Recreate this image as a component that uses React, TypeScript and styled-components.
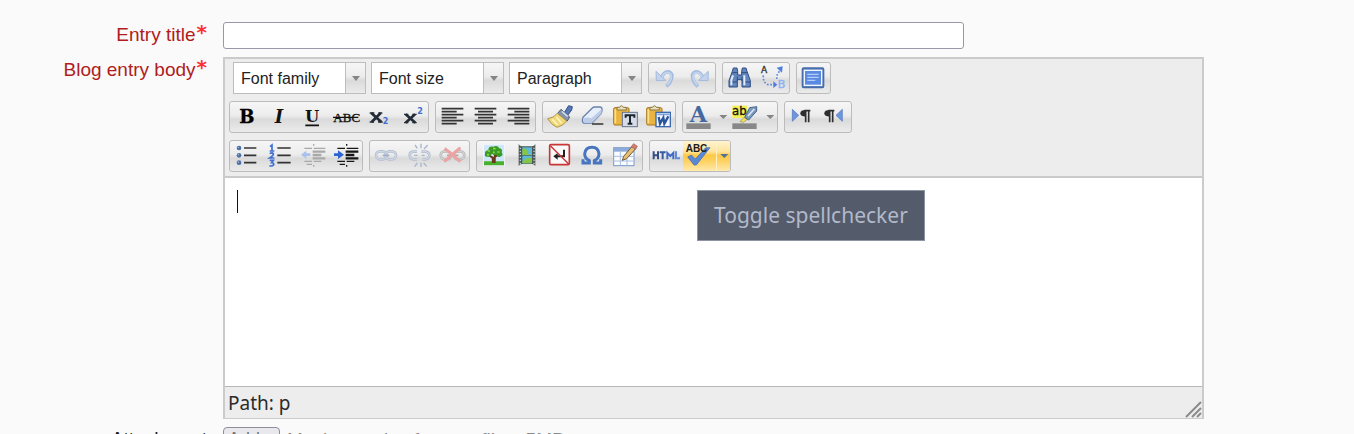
import React from "react";
import styled, { createGlobalStyle, css } from "styled-components";

const Global = createGlobalStyle`
  * { box-sizing: border-box; }
  html, body { margin: 0; height: 100%; overflow: hidden; }
  body { background: #fafafa; font-family: "Liberation Sans", Arial, sans-serif; color: #222; }
`;

const Form = styled.form`
  display: grid;
  grid-template-columns: 207px minmax(0, 1fr);
  column-gap: 16px;
  row-gap: 8px;
  padding: 22px 150px 0 0;
`;

const Label = styled.label<{ $plain?: boolean }>`
  display: flex;
  justify-content: flex-end;
  align-items: flex-start;
  gap: 1px;
  padding-top: ${(p) => (p.$plain ? "0" : "1px")};
  font-size: 19px;
  line-height: 24px;
  white-space: nowrap;
  color: ${(p) => (p.$plain ? "#222" : "#b01c20")};
`;

const Star = styled.span`
  font: bold 20px/18px "DejaVu Sans", sans-serif;
  color: #fb3034;
`;

const TitleInput = styled.input`
  width: 741px;
  max-width: 100%;
  height: 27px;
  padding: 0 6px;
  font: inherit;
  background: #fff;
  border: 1px solid #9a98a8;
  border-radius: 3px;
`;

const Editor = styled.section`
  border: 2px solid #cbcbcb;
  border-bottom-width: 1px;
  background: #ededed;
`;

const Toolbar = styled.div`
  display: flex;
  flex-direction: column;
  gap: 7px;
  padding: 3px 4px 4px;
  border-bottom: 2px solid #cacaca;
`;

const ToolRow = styled.div<{ $inset?: boolean }>`
  display: flex;
  gap: 6px;
  padding-left: ${(p) => (p.$inset ? "4px" : "0")};
`;

const SelectSet = styled.div`
  display: flex;
  gap: 5px;
`;

const shade = "linear-gradient(#f6f6f6 0%, #ececec 45%, #dadada 58%, #ebebeb 100%)";

const SelectBox = styled.span`
  display: grid;
  grid-template-columns: 1fr 20px;
  width: 133px;
  height: 32px;
  border: 1px solid #bdbdbd;
  background: #fff;
`;

const Select = styled.select`
  grid-area: 1 / 1 / 2 / 3;
  appearance: none;
  border: 0;
  padding: 0 0 0 7px;
  background: transparent;
  color: #222;
  font: 16px "Liberation Sans", Arial, sans-serif;
`;

const SelectArrow = styled.span`
  grid-area: 1 / 2;
  display: flex;
  align-items: center;
  justify-content: center;
  border-left: 1px solid #bdbdbd;
  background: ${shade};
  pointer-events: none;
`;

const Group = styled.div`
  display: flex;
  height: 32px;
  border: 1px solid #bcbcbc;
  border-radius: 3px;
  background: ${shade};
  overflow: hidden;
`;

const Tool = styled.button<{ $narrow?: boolean; $hot?: boolean }>`
  display: block;
  width: ${(p) => (p.$narrow ? "14px" : "33px")};
  height: 30px;
  padding: 0;
  border: 0;
  background: none;
  ${(p) =>
    p.$hot &&
    css`
      background: linear-gradient(#fff3d0 0%, #ffe49a 36%, #fdc944 48%, #fed468 70%, #ffe9ae 100%);
    `}
  ${(p) => p.$hot && p.$narrow && "border-left: 1px solid #fff0c4;"}
  svg { display: block; }
`;

const Writing = styled.div`
  position: relative;
  height: 208px;
  background: #fff;
`;

const TextArea = styled.textarea`
  display: block;
  width: 100%;
  height: 100%;
  padding: 12px;
  border: 0;
  outline: 0;
  resize: none;
  background: #fff;
  font: 19px/24px "Liberation Sans", Arial, sans-serif;
`;

const Caret = styled.span`
  position: absolute;
  left: 12px;
  top: 12px;
  width: 1px;
  height: 23px;
  background: #111;
`;

const Tooltip = styled.div`
  position: absolute;
  left: 472px;
  top: 12px;
  padding: 12px 16px;
  border: 1px solid #8d93a3;
  background: #545b6b;
  color: #b2b9c9;
  font: 21px/25px "Noto Sans", sans-serif;
  white-space: nowrap;
`;

const Status = styled.footer`
  display: flex;
  justify-content: space-between;
  align-items: flex-end;
  height: 32px;
  padding-left: 3px;
  border-top: 1px solid #b6b6b6;
  color: #2b2b2b;
  font: 19px/30px "Noto Sans", sans-serif;
`;

const Attach = styled.div`
  display: flex;
  gap: 7px;
  color: #8a8a8a;
  font-size: 19px;
  line-height: 25px;
  white-space: nowrap;
`;

const AddButton = styled.button`
  width: 57px;
  height: 27px;
  padding: 0 0 2px;
  border: 1px solid #8f8d9c;
  border-radius: 4px;
  background: #e9e9ed;
  color: #777;
  font: 18px "Liberation Sans", Arial, sans-serif;
`;

/* Tool glyphs share a 99 x 90 grid, three units to a pixel. */
const Glyph = ({ children, w = 33 }: { children: React.ReactNode; w?: number }) => (
  <svg width={w} height={30} viewBox={`0 0 ${w * 3} 90`} fill="none" aria-hidden="true">
    {children}
  </svg>
);

const serif = "'DejaVu Serif', serif";
const sans = "'DejaVu Sans', sans-serif";
const blue = "#3f6fd0";

const Lines = ({ rows }: { rows: number[][] }) => (
  <g stroke="#343434" strokeWidth="5">
    {rows.map(([a, b], i) => (
      <path key={i} d={`M${a} ${20 + i * 9}H${b}`} />
    ))}
  </g>
);

const Undo = () => (
  <g>
    <path d="M36 46Q46 24 60 27Q72 32 67 48Q64 60 52 70" stroke="#a3bbde" strokeWidth="11" />
    <path d="M37 46Q46 27 59 29Q69 33 66 47Q62 59 54 67" stroke="#c3d3ec" strokeWidth="6" />
    <path d="M21 25L22 53L50 52Z" fill="#c3d3ec" stroke="#a3bbde" strokeWidth="3" />
  </g>
);

const Clipboard = () => (
  <g>
    <rect x="14" y="17" width="46" height="52" rx="4" fill="#e9b540" stroke="#a8781f" strokeWidth="3" />
    <path d="M19 22V64" stroke="#ffe08a" strokeWidth="5" />
    <path d="M24 24V16H32Q37 6 43 16H52V24Z" fill="#e8dfbb" stroke="#8b7744" strokeWidth="3" />
  </g>
);

const Dent = ({ ink, arrow, flip }: { ink: string; arrow: string; flip?: boolean }) => (
  <g>
    <path d="M53 9V14M53 72V77" stroke={ink} strokeWidth="4" />
    <path d="M25 22H48M53 22H88M25 61H48M53 61H76M32 70H48" stroke={ink} strokeWidth="4" />
    <path d="M50 32H88M50 42H76M50 52H88" stroke={ink} strokeWidth="7" />
    {flip ? (
      <path d="M15 37H27V28L45 41L27 54V45H15Z" fill={arrow} />
    ) : (
      <path d="M15 41L31 29V37H43V45H31V53Z" fill={arrow} />
    )}
  </g>
);

const Ring = ({ x, c }: { x: number; c: string }) => (
  <g>
    <rect x={x} y="31" width="32" height="24" rx="12" stroke={c} strokeWidth="8" />
    <rect x={x} y="31" width="32" height="24" rx="12" stroke="#e6eaf2" strokeWidth="2" />
  </g>
);

const icons: Record<string, React.ReactNode> = {
  bold: <text x="28" y="64" fontFamily={serif} fontWeight="700" fontSize="54" fill="#000" stroke="#000" strokeWidth="1">B</text>,
  italic: <text x="35" y="64" fontFamily={serif} fontWeight="700" fontStyle="italic" fontSize="54" fill="#111">I</text>,
  underline: (
    <g>
      <text x="27" y="59" fontFamily={serif} fontWeight="700" fontSize="49" fill="#111">U</text>
      <path d="M28 70H69" stroke="#111" strokeWidth="5" />
    </g>
  ),
  strike: (
    <g>
      <text x="13" y="59" fontFamily="'Liberation Serif', serif" fontSize="39" fill="#111" stroke="#111" strokeWidth="1">ABC</text>
      <path d="M12 46H88" stroke="#111" strokeWidth="4" />
    </g>
  ),
  sub: (
    <g>
      <path d="M28 33L58 60M56 33L29 60" stroke="#222b36" strokeWidth="8" />
      <path d="M23 33H37M49 33H61M23 60H36M48 60H62" stroke="#222b36" strokeWidth="4" />
      <text x="62" y="67" fontFamily={sans} fontWeight="700" fontSize="24" fill={blue}>2</text>
    </g>
  ),
  sup: (
    <g>
      <path d="M32 37L61 62M60 37L32 62" stroke="#222b36" strokeWidth="8" />
      <path d="M27 37H40M52 37H65M27 62H40M52 62H65" stroke="#222b36" strokeWidth="4" />
      <text x="67" y="36" fontFamily={sans} fontWeight="700" fontSize="24" fill={blue}>2</text>
    </g>
  ),
  left: <Lines rows={[[17, 82], [17, 62], [17, 82], [17, 62], [17, 82], [17, 62]]} />,
  center: <Lines rows={[[17, 82], [27, 72], [17, 82], [27, 72], [17, 82], [27, 72]]} />,
  right: <Lines rows={[[17, 82], [37, 82], [17, 82], [37, 82], [17, 82], [37, 82]]} />,
  brush: (
    <g>
      <path d="M63 33L77 11L88 14L86 24L74 40Z" fill="#5577b5" stroke="#34528a" strokeWidth="3" />
      <path d="M54 22L80 45L72 58L43 35Z" fill="#8494ac" stroke="#4b5a72" strokeWidth="3" />
      <path d="M57 28L74 43" stroke="#d5dde9" strokeWidth="5" />
      <path d="M43 34L71 57Q62 71 42 76Q24 68 14 50Q32 48 43 34Z" fill="#efd77c" stroke="#b39847" strokeWidth="3" />
      <path d="M28 52L44 69M40 45L56 64" stroke="#fff4b8" strokeWidth="5" />
    </g>
  ),
  eraser: (
    <g>
      <path d="M21 46L49 18Q52 15 57 15H73Q79 16 78 25L76 34L50 61Q47 64 42 64H27Q19 64 19 55Z" fill="#e6eefb" stroke="#6983ae" strokeWidth="4" />
      <path d="M22 48Q36 44 46 49L77 22V34L50 61Q47 64 42 64H27Q20 62 22 48Z" fill="#bccbe6" />
      <path d="M48 66H82" stroke="#303030" strokeWidth="4" />
    </g>
  ),
  pasteText: (
    <g>
      <Clipboard />
      <rect x="40" y="31" width="45" height="43" fill="#d6dde8" stroke="#65738a" strokeWidth="3" />
      <path d="M50 47V40H76V47M63 40V65M56 65H70" stroke="#1c2430" strokeWidth="6" />
    </g>
  ),
  pasteWord: (
    <g>
      <Clipboard />
      <rect x="42" y="31" width="43" height="43" fill="#f4f8ff" stroke="#3d69ad" strokeWidth="4" />
      <path d="M46 37H82" stroke="#7fa3dc" strokeWidth="5" />
      <path d="M50 45L54 65L64 47L67 65L79 43" stroke="#2b559c" strokeWidth="7" />
    </g>
  ),
  color: (
    <g>
      <text x="20" y="59" fontFamily={serif} fontWeight="700" fontSize="67" fill="#45689f">A</text>
      <rect x="10" y="64" width="73" height="17" fill="#888" />
    </g>
  ),
  highlight: (
    <g>
      <rect x="7" y="11" width="44" height="37" fill="#f3ee55" />
      <path d="M30 59L42 46L52 52L40 61Z" fill="#f0e060" stroke="#9b8b36" strokeWidth="2" />
      <path d="M44 46L59 17L80 14L80 27L56 54Z" fill="#7b98bd" stroke="#456489" strokeWidth="3" />
      <path d="M54 42L73 21" stroke="#dae7f4" strokeWidth="5" />
      <text x="6" y="40" fontFamily={sans} fontSize="35" fill="#111" stroke="#111" strokeWidth="1">ab</text>
      <rect x="7" y="64" width="73" height="17" fill="#888" />
    </g>
  ),
  ltr: (
    <g>
      <path d="M22 22L41 40L22 58Z" fill="#6f95dc" stroke="#4a74c5" strokeWidth="2" />
      <path d="M76 26H58M62 26V61M71 26V61" stroke="#2e2e2e" strokeWidth="5" />
      <path d="M62 24Q46 24 46 34Q46 44 62 44Z" fill="#2e2e2e" />
    </g>
  ),
  rtl: (
    <g>
      <path d="M73 22L54 40L73 58Z" fill="#6f95dc" stroke="#4a74c5" strokeWidth="2" />
      <path d="M49 26H31M35 26V61M44 26V61" stroke="#2e2e2e" strokeWidth="5" />
      <path d="M35 24Q19 24 19 34Q19 44 35 44Z" fill="#2e2e2e" />
    </g>
  ),
  bullets: (
    <g>
      {[21, 43, 65].map((y) => (
        <g key={y}>
          <circle cx="27" cy={y} r="7" fill="#4d6fa8" />
          <circle cx="25" cy={y - 2} r="2" fill="#b7c8e4" />
          <path d={`M42 ${y}H79`} stroke="#333" strokeWidth="5" />
        </g>
      ))}
    </g>
  ),
  numbers: (
    <g>
      <path d="M21 17L27 12V30M20 30H34" stroke={blue} strokeWidth="5" />
      <path d="M20 38Q28 33 31 38Q32 43 20 51H34" stroke={blue} strokeWidth="5" />
      <path d="M20 58H31L26 65Q33 65 32 71Q28 77 19 74" stroke={blue} strokeWidth="5" />
      <path d="M43 21H83M43 43H83M43 65H83" stroke="#333" strokeWidth="5" />
    </g>
  ),
  outdent: <Dent ink="#a9a9a9" arrow="#a9c1ec" />,
  indent: <Dent ink="#161616" arrow="#2d66d4" flip />,
  link: (
    <g>
      <Ring x={18} c="#b4bfd2" />
      <Ring x={46} c="#b4bfd2" />
      <path d="M38 43H58" stroke="#a3afc5" strokeWidth="5" />
    </g>
  ),
  unlink: (
    <g>
      <path d="M42 32H30Q20 33 20 43Q20 54 30 55H42M55 32H67Q79 33 79 43Q79 54 67 55H58" stroke="#b4bfd2" strokeWidth="8" />
      <path d="M42 32H30Q20 33 20 43Q20 54 30 55H42M55 32H67Q79 33 79 43Q79 54 67 55H58" stroke="#e6eaf2" strokeWidth="2" />
      <path d="M34 43H44M56 43H65M36 12L43 22M54 8V22M74 12L63 24M35 77L43 66M54 78V65M71 76L62 66" stroke="#a9b5c9" strokeWidth="4" />
    </g>
  ),
  removeLink: (
    <g>
      <Ring x={14} c="#b7b7b7" />
      <Ring x={53} c="#b7b7b7" />
      <path d="M33 43H67" stroke="#b0a8a8" strokeWidth="5" />
      <path d="M26 22L73 62M73 20L25 62" stroke="#eda3a3" strokeWidth="9" />
    </g>
  ),
  image: (
    <g>
      <rect x="20" y="10" width="62" height="64" fill="#cfe6fb" stroke="#f8fbff" strokeWidth="2" />
      <path d="M21 61H81V73H21Z" fill="#49af2e" />
      <path d="M48 66L47 50L34 42M49 52L64 40M53 66L54 34" stroke="#6b3a19" strokeWidth="6" />
      <path d="M24 40Q22 29 34 27Q34 15 49 17Q61 11 67 22Q78 24 74 34Q81 45 69 47Q61 50 58 41Q51 45 45 38Q39 50 31 47Q22 48 24 40Z" fill="#399b25" />
      <path d="M32 30H39M48 23H56M61 33H68M30 41H36M48 34H53" stroke="#92d34b" strokeWidth="5" />
    </g>
  ),
  media: (
    <g>
      <path d="M26 9Q29 16 36 16H66Q73 16 76 9V75Q73 69 66 69H36Q29 69 26 75Z" fill="#4b5656" />
      <rect x="37" y="19" width="29" height="23" fill="#5db9dc" />
      <rect x="37" y="44" width="29" height="23" fill="#5db9dc" />
      <path d="M37 24L45 22L56 32L52 38L66 42H37ZM37 62L50 52L66 50V67H37Z" fill="#86c545" />
      <path d="M31 20V70M72 20V70" stroke="#c6cfcf" strokeWidth="4" strokeDasharray="4 5" />
    </g>
  ),
  nobreak: (
    <g>
      <rect x="20" y="11" width="59" height="60" rx="4" fill="#f9f9f9" stroke="#c93636" strokeWidth="5" />
      <path d="M63 26V46H42" stroke="#202020" strokeWidth="6" />
      <path d="M44 36V56L31 46Z" fill="#202020" />
      <path d="M22 14L77 69" stroke="#cc3035" strokeWidth="4" />
    </g>
  ),
  omega: (
    <path d="M21 55V66H40V59Q26 52 26 39Q28 19 48 19Q67 19 69 39Q68 53 55 59V66H74V55" stroke="#4775bf" strokeWidth="9" />
  ),
  table: (
    <g>
      <rect x="14" y="20" width="61" height="54" fill="#fafdff" stroke="#799ac7" strokeWidth="3" />
      <rect x="15" y="20" width="59" height="12" fill="#8cabd8" />
      <path d="M14 46H74M14 60H74M34 32V73M54 32V73" stroke="#a8c0e3" strokeWidth="3" />
      <path d="M44 46L71 14L81 22L53 53L40 58Z" fill="#e7bf73" stroke="#715c39" strokeWidth="3" />
      <path d="M67 17L74 8L85 16L79 25Z" fill="#dc7c70" stroke="#98574b" strokeWidth="2" />
    </g>
  ),
  html: (
    <g strokeWidth="6">
      <path d="M11 31V55M24 31V55M11 43H24" stroke="#344e83" />
      <path d="M29 34H47M38 34V55" stroke="#395b9b" />
      <path d="M52 55V36L61 45L70 36V55" stroke="#3f6cc2" />
      <path d="M78 31V52H90" stroke="#5c8be0" />
    </g>
  ),
  spell: (
    <g>
      <path d="M14 48L25 42L37 54L68 20H81L40 72H33Z" fill="#5a88d4" stroke="#3b67b2" strokeWidth="2" />
      <text x="8" y="32" fontFamily="'Liberation Sans', sans-serif" fontWeight="700" fontSize="30" fill="#1c1c1c">ABC</text>
    </g>
  ),
  undo: <Undo />,
  redo: (
    <g transform="translate(100 0) scale(-1 1)">
      <Undo />
    </g>
  ),
  find: (
    <g fill="#6386bd" stroke="#2e4d82" strokeWidth="3">
      <path d="M28 25L31 15H42L44 25V36H56V25L58 15H69L72 25L82 53V72H57V50H43V72H18V53Z" />
      <path d="M28 29H44M56 29H72M43 41V54M57 41V54M19 57H42M58 57H81" />
      <path d="M30 37L25 51V67M64 37V67" stroke="#e2edfb" strokeWidth="6" />
    </g>
  ),
  replace: (
    <g>
      <text x="15" y="30" fontFamily={sans} fontSize="27" fill="#333" stroke="#333">A</text>
      <text x="65" y="75" fontFamily={sans} fontSize="33" fill="#8bb0f4" stroke="#8bb0f4">B</text>
      <path d="M22 37Q20 58 36 65H54M62 48L64 34L72 22" stroke="#5d87dd" strokeWidth="5" strokeDasharray="5 5" />
      <path d="M52 55L64 65L52 75ZM62 14L80 10L78 29Z" fill="#4e7ddd" />
    </g>
  ),
  fullscreen: (
    <g>
      <rect x="16" y="15" width="64" height="59" rx="4" fill="#597fbd" stroke="#456ba8" strokeWidth="4" />
      <rect x="22" y="22" width="52" height="45" fill="#5c8ae0" stroke="#eff6ff" strokeWidth="4" />
      <path d="M31 34H65M31 43H65M31 52H55" stroke="#b3cefb" strokeWidth="4" />
    </g>
  ),
};

const names: Record<string, string> = {
  pasteText: "Paste as plain text",
  pasteWord: "Paste from Word",
  ltr: "Left to right",
  rtl: "Right to left",
  spell: "Toggle spellchecker",
};

const ToolButton = ({ icon, hot }: { icon: string; hot?: boolean }) => (
  <Tool type="button" aria-label={names[icon] ?? icon} $hot={hot}>
    <Glyph>{icons[icon]}</Glyph>
  </Tool>
);

const MenuButton = ({ label, hot }: { label: string; hot?: boolean }) => (
  <Tool type="button" aria-label={label} $narrow $hot={hot}>
    <Glyph w={14}>
      <path d="M10 39H34L22 51Z" fill={hot ? "#4e7398" : "#858585"} />
    </Glyph>
  </Tool>
);

const ToolGroup = ({ list }: { list: string[] }) => (
  <Group>
    {list.map((icon) => (
      <ToolButton key={icon} icon={icon} />
    ))}
  </Group>
);

const Picker = ({ label }: { label: string }) => (
  <SelectBox>
    <Select aria-label={label}>
      <option>{label}</option>
    </Select>
    <SelectArrow>
      <svg width="8" height="5" viewBox="0 0 8 5" aria-hidden="true">
        <path d="M0 0H8L4 5Z" fill="#858585" />
      </svg>
    </SelectArrow>
  </SelectBox>
);

export default function App() {
  return (
    <>
      <Global />
      <Form onSubmit={(e) => e.preventDefault()}>
        <Label htmlFor="title">Entry title<Star>*</Star></Label>
        <div>
          <TitleInput id="title" type="text" />
        </div>

        <Label htmlFor="entry">Blog entry body<Star>*</Star></Label>
        <Editor>
          <Toolbar role="toolbar">
            <ToolRow $inset>
              <SelectSet>
                <Picker label="Font family" />
                <Picker label="Font size" />
                <Picker label="Paragraph" />
              </SelectSet>
              <ToolGroup list={["undo", "redo"]} />
              <ToolGroup list={["find", "replace"]} />
              <ToolGroup list={["fullscreen"]} />
            </ToolRow>
            <ToolRow>
              <ToolGroup list={["bold", "italic", "underline", "strike", "sub", "sup"]} />
              <ToolGroup list={["left", "center", "right"]} />
              <ToolGroup list={["brush", "eraser", "pasteText", "pasteWord"]} />
              <Group>
                <ToolButton icon="color" />
                <MenuButton label="Text colours" />
                <ToolButton icon="highlight" />
                <MenuButton label="Highlight colours" />
              </Group>
              <ToolGroup list={["ltr", "rtl"]} />
            </ToolRow>
            <ToolRow>
              <ToolGroup list={["bullets", "numbers", "outdent", "indent"]} />
              <ToolGroup list={["link", "unlink", "removeLink"]} />
              <ToolGroup list={["image", "media", "nobreak", "omega", "table"]} />
              <Group>
                <ToolButton icon="html" />
                <ToolButton icon="spell" hot />
                <MenuButton label="Spellchecker languages" hot />
              </Group>
            </ToolRow>
          </Toolbar>
          <Writing>
            <TextArea id="entry" />
            <Caret />
            <Tooltip role="tooltip">Toggle spellchecker</Tooltip>
          </Writing>
          <Status>
            <span>Path: p</span>
            <svg width="17" height="17" viewBox="0 0 17 17" aria-hidden="true">
              <path d="M1 16L16 1M7 16L16 7M12 16L16 12" stroke="#8b8b8b" strokeWidth="2" />
            </svg>
          </Status>
        </Editor>

        <Label htmlFor="attachment" $plain>Attachment</Label>
        <Attach>
          <AddButton id="attachment" type="button">Add...</AddButton>
          <span>Maximum size for new files: 5MB</span>
        </Attach>
      </Form>
    </>
  );
}
